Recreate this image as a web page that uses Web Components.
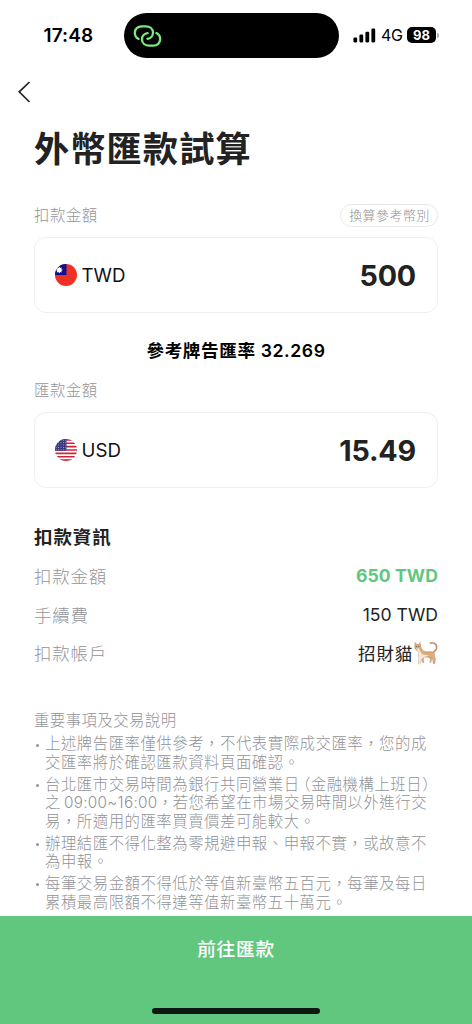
<!DOCTYPE html>
<html lang="zh-Hant">
<head>
<meta charset="utf-8">
<title>外幣匯款試算</title>
<style>
html,body{margin:0;padding:0;background:#fff}
body{font-family:Inter,"Noto Sans CJK TC",sans-serif;color:#222}
</style>
</head>
<body>
<remit-app></remit-app>
<script>
const define = (name, html) => customElements.define(name, class extends HTMLElement {
  constructor() {
    super();
    const t = document.createElement('template');
    t.innerHTML = html;
    this.attachShadow({mode: 'open'}).append(t.content.cloneNode(true));
  }
});

define('status-bar', `<style>
:host{display:grid;grid-template-columns:124px 215px 1fr;height:72px;color:#000;box-sizing:border-box;padding-top:13px}
.time{font-weight:600;font-size:19px;line-height:45px;padding-left:43.5px;letter-spacing:.1px}
.island{height:45px;border-radius:23px;background:#000;display:flex;align-items:center;padding-left:9px;box-sizing:border-box}
.right{display:flex;align-items:center;height:44px;padding-left:14px}
.net{font-size:16px;line-height:20px;margin-left:5px;width:22px;letter-spacing:-.4px}
.bat{width:29px;height:16px;border-radius:5px;background:#000;color:#fff;font-weight:700;font-size:13px;line-height:16px;text-align:center;margin-left:4px}
.nub{width:1.5px;height:5px;border-radius:0 2px 2px 0;background:#aaa;margin-left:1px}
</style>
<div class="time">17:48</div>
<div class="island"><svg width="29" height="24" viewBox="0 0 29 24" fill="none" stroke="#7be87d" stroke-width="2.3" stroke-linecap="round"><path d="M5.6 14.9C3 13.5 1.8 11.3 1.8 8.9C1.8 5 4.8 2.3 8.5 2.3H12.7C17 2.3 20 5 20 8.6C20 12 17.5 14.6 14.4 14.8"/><path d="M23.4 9.1C26 10.5 27.2 12.7 27.2 15.1C27.2 19 24.2 21.7 20.5 21.7H16.3C12 21.7 9 19 9 15.4C9 12 11.5 9.4 14.6 9.2"/></svg></div>
<div class="right"><svg width="23" height="15" viewBox="0 0 23 15"><rect x=".4" y="9.6" width="3.8" height="4.8" rx="1.1"/><rect x="6.4" y="6.6" width="3.8" height="7.8" rx="1.1"/><rect x="12.4" y="3.8" width="3.8" height="10.6" rx="1.1"/><rect x="18.4" y=".6" width="3.8" height="13.8" rx="1.1"/></svg><span class="net">4G</span><span class="bat">98</span><span class="nub"></span></div>`);

define('nav-bar', `<style>:host{display:flex;height:40px;align-items:center;padding-left:17px}</style>
<svg width="14" height="22" viewBox="0 0 14 22" fill="none" stroke="#222" stroke-width="1.7"><path d="M12.5 1L2.2 10.8L12.5 21"/></svg>`);

define('amount-field', `<style>
:host{display:block}
.head{display:flex;justify-content:space-between;height:22px;align-items:center;margin-bottom:11px}
.label{font-size:15.4px;letter-spacing:.5px;line-height:22px;padding-top:1px;color:#949599;font-weight:300}
.card{height:76px;box-sizing:border-box;border:1.5px solid #eeeeef;border-radius:12px;display:flex;align-items:center;padding:0 21px 0 19.5px}
.code{font-size:18.7px;color:#111;margin-left:5px;flex:1}
.amount{font-size:28.7px;font-weight:700;letter-spacing:-.2px;color:#222}
</style>
<div class="head"><span class="label"><slot name="label"></slot></span><slot name="action"></slot></div>
<div class="card"><slot name="flag"></slot><span class="code"><slot name="code"></slot></span><span class="amount"><slot></slot></span></div>`);

define('pill-button', `<style>:host{display:block;box-sizing:border-box;width:98px;height:23px;border:1.5px solid #e9e9eb;border-radius:12px;text-align:center;font-size:12.8px;line-height:21px;letter-spacing:.65px;padding-left:1px;color:#8e8f94;font-weight:300;white-space:nowrap}</style><slot></slot>`);

define('flag-tw', `<style>:host{display:block;width:22px;height:22px}svg{display:block}</style>
<svg width="22" height="22" viewBox="0 0 22 22"><defs><clipPath id="c"><circle cx="11" cy="11" r="11"/></clipPath></defs><g clip-path="url(#c)"><path fill="#ee3124" d="M0 0h22v22H0z"/><path fill="#10108c" d="M0 0h11.5v11H0z"/><path fill="#fff" d="M4.3 2.7L5.2 4.1L6.8 3.5L6.3 5.2L7.9 6L6.3 6.8L6.8 8.5L5.2 7.9L4.3 9.3L3.4 7.9L1.8 8.5L2.3 6.8L.7 6L2.3 5.2L1.8 3.5L3.4 4.1z"/></g></svg>`);

define('flag-us', `<style>:host{display:block;width:22px;height:22px}svg{display:block}</style>
<svg width="22" height="22" viewBox="0 0 22 22"><defs><clipPath id="c"><circle cx="11" cy="11" r="11"/></clipPath><pattern id="s" width="2.4" height="2.4" patternUnits="userSpaceOnUse"><circle cx="1.2" cy="1.2" r=".45" fill="#c9cae6"/></pattern></defs><g clip-path="url(#c)"><path fill="#fff" d="M0 0h22v22H0z"/><path stroke="#c9283a" stroke-width="1.7" d="M0 .85h22M0 4.23h22M0 7.61h22M0 11h22M0 14.38h22M0 17.76h22M0 21.15h22"/><path fill="#3c3b80" d="M0 0h11.5v11.8H0z"/><path fill="url(#s)" d="M0 0h11.5v11.8H0z"/></g></svg>`);

define('cat-icon', `<style>:host{display:block;width:24px;height:24px}svg{display:block}</style>
<svg width="24" height="24" viewBox="0 0 24 24" fill="none" stroke-linecap="round" stroke-linejoin="round"><path d="M19.2 11.4C21.6 9.8 23 8 22.6 5.4C22.2 2.6 19.5 1.3 16.4 2.3" stroke="#a77d59" stroke-width="1.5"/><path d="M19.2 11.2C21.5 9.4 22.6 7.8 22.2 5.6C21.8 3.3 19.6 1.8 16.8 2.4" stroke="#dfb68e" stroke-width=".7"/><path d="M16.5 14L18 17L17 21.6h-1.2l.3-3.8-2.3-2.4M8.5 15L9.8 18l.2 3.8H8.8L7 18.4" fill="#c9b19a" stroke="#ad937b" stroke-width=".3"/><path d="M1.2 1.6L2.7 3.3L4.8 3.3L6.1 1.5L6.7 5.1C7.3 7.7 8.6 10.2 11.4 10.8L17.7 10.7C20.2 11 20.9 12.4 20.3 14.7L21.3 17.7L20.9 22.5H19.3L18.9 18.8L16 15.9L9.4 16.2L7 18.7L6 22.9H4.6L5 17L4.1 10C1.3 9 .6 7.5.8 5.7z" fill="#e2ac7c" stroke="#b58460" stroke-width=".5"/><path d="M1.8 7L4.6 6.8L6 10.2L8.4 13.6L15 14.4L9.4 16.2L7 18.7L6 22.9H4.6L5 17L4.1 10z" fill="#f4eadf"/><path d="M11 11.2l.7 1.4M13.6 11.2l.5 1.4M16.2 11.2l.2 1.4" stroke="#c48f62" stroke-width=".5"/><circle cx="2.2" cy="5.4" r=".5" fill="#333"/><circle cx="4.8" cy="5.3" r=".5" fill="#333"/><path d="M3 7h.8" stroke="#77534a" stroke-width=".5"/></svg>`);

define('info-row', `<style>
:host{display:flex;justify-content:space-between;align-items:center;height:38.5px;font-size:17.5px;color:#222}
.k{color:#949599;letter-spacing:.75px;font-weight:300}
.v{display:flex;align-items:center;white-space:nowrap}
</style><span class="k"><slot name="key"></slot></span><span class="v"><slot></slot></span>`);

define('note-item', `<style>
:host{display:flex;margin-bottom:2.8px;line-height:18.7px;white-space:nowrap}
.dot{width:3px;height:3px;border-radius:50%;background:#929398;margin:8.5px 6px 0 2px;flex:none}
</style><span class="dot"></span><div><slot></slot></div>`);

define('bottom-action', `<style>
:host{display:flex;flex-direction:column;align-items:center;justify-content:space-between;height:108px;box-sizing:border-box;background:#61c77e;padding:18px 0 10px}
.t{color:#fff;font-size:18.7px;line-height:32px;letter-spacing:.7px;font-weight:500}
.h{width:168px;height:6px;border-radius:3px;background:#101814}
</style><div class="t"><slot></slot></div><div class="h"></div>`);

define('remit-app', `<style>
:host{display:flex;flex-direction:column;width:472px;height:1024px;overflow:hidden;background:#fff}
main{flex:1;min-height:0;overflow:hidden;padding:0 34px}
h1{margin:12px 0 30px;font-size:35.2px;line-height:50px;letter-spacing:1.1px;font-weight:700;color:#222}
.rate{text-align:center;color:#000;font-weight:600;font-size:17.6px;line-height:26px;margin:25px 0 15px;letter-spacing:.6px}
h2{margin:35px 0 5.4px;font-size:18.5px;letter-spacing:.9px;line-height:28px;font-weight:700;color:#222}
.green{color:#61c77e;font-weight:700;font-size:17.6px;letter-spacing:.1px}
.num{font-size:17.6px}
.name{letter-spacing:.8px;margin-right:1px}
.notes{font-size:15.4px;letter-spacing:.52px;color:#929398;font-weight:300}
.nt{letter-spacing:.45px;line-height:24px;margin:37px 0 2.6px}
.time{font-size:15.3px;letter-spacing:.3px;margin-left:3px}
.open{font-feature-settings:"halt";margin-left:3px}
.close{font-feature-settings:"halt"}
.comma{letter-spacing:-.4px}
</style>
<status-bar></status-bar><nav-bar></nav-bar>
<main>
<h1>外幣匯款試算</h1>
<amount-field><span slot="label">扣款金額</span><pill-button slot="action">換算參考幣別</pill-button><flag-tw slot="flag"></flag-tw><span slot="code">TWD</span>500</amount-field>
<div class="rate">參考牌告匯率 32.269</div>
<amount-field><span slot="label">匯款金額</span><flag-us slot="flag"></flag-us><span slot="code">USD</span>15.49</amount-field>
<h2>扣款資訊</h2>
<info-row><span slot="key">扣款金額</span><span class="green">650 TWD</span></info-row>
<info-row><span slot="key">手續費</span><span class="num">150 TWD</span></info-row>
<info-row><span slot="key">扣款帳戶</span><span class="name">招財貓</span><cat-icon></cat-icon></info-row>
<div class="notes"><div class="nt">重要事項及交易說明</div>
<note-item>上述牌告匯率僅供參考，不代表實際成交匯率，您的成<br>交匯率將於確認匯款資料頁面確認。</note-item>
<note-item>台北匯市交易時間為銀行共同營業日<span class="open">（</span>金融機構上班日<span class="close">）</span><br>之<span class="time">09:00~16:00</span><span class="comma">，</span>若您希望在市場交易時間以外進行交<br>易，所適用的匯率買賣價差可能較大。</note-item>
<note-item>辦理結匯不得化整為零規避申報、申報不實，或故意不<br>為申報。</note-item>
<note-item>每筆交易金額不得低於等值新臺幣五百元，每筆及每日<br>累積最高限額不得達等值新臺幣五十萬元。</note-item>
</div>
</main>
<bottom-action>前往匯款</bottom-action>`);
</script>
</body>
</html>
